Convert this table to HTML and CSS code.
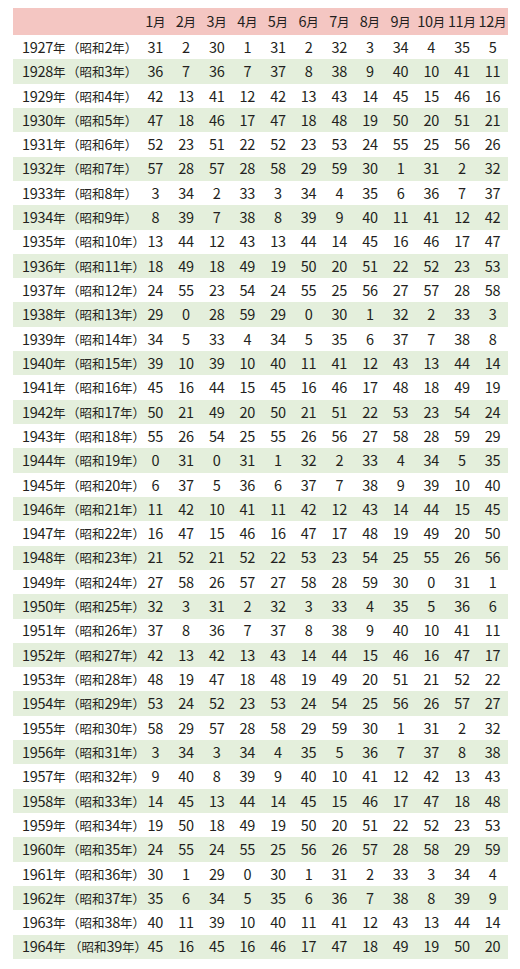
FILE: index.html
```html
<!DOCTYPE html>
<html lang="ja">
<head>
<meta charset="utf-8">
<title>日干支早見表</title>
<link rel="stylesheet" href="styles.css">
</head>
<body>
<table class="chart">
<colgroup><col class="c-lbl"><col span="12"></colgroup>
<thead>
<tr><th></th><th>1<span class="k">月</span></th><th>2<span class="k">月</span></th><th>3<span class="k">月</span></th><th>4<span class="k">月</span></th><th>5<span class="k">月</span></th><th>6<span class="k">月</span></th><th>7<span class="k">月</span></th><th>8<span class="k">月</span></th><th>9<span class="k">月</span></th><th>10<span class="k">月</span></th><th>11<span class="k">月</span></th><th>12<span class="k">月</span></th></tr>
</thead>
<tbody>
<tr><th class="lbl"><span class="yr">1927<span class="k">年</span></span><span class="k">（昭和</span>2<span class="k">年）</span></th><td>31</td><td>2</td><td>30</td><td>1</td><td>31</td><td>2</td><td>32</td><td>3</td><td>34</td><td>4</td><td>35</td><td>5</td></tr>
<tr class="alt"><th class="lbl"><span class="yr">1928<span class="k">年</span></span><span class="k">（昭和</span>3<span class="k">年）</span></th><td>36</td><td>7</td><td>36</td><td>7</td><td>37</td><td>8</td><td>38</td><td>9</td><td>40</td><td>10</td><td>41</td><td>11</td></tr>
<tr><th class="lbl"><span class="yr">1929<span class="k">年</span></span><span class="k">（昭和</span>4<span class="k">年）</span></th><td>42</td><td>13</td><td>41</td><td>12</td><td>42</td><td>13</td><td>43</td><td>14</td><td>45</td><td>15</td><td>46</td><td>16</td></tr>
<tr class="alt"><th class="lbl"><span class="yr">1930<span class="k">年</span></span><span class="k">（昭和</span>5<span class="k">年）</span></th><td>47</td><td>18</td><td>46</td><td>17</td><td>47</td><td>18</td><td>48</td><td>19</td><td>50</td><td>20</td><td>51</td><td>21</td></tr>
<tr><th class="lbl"><span class="yr">1931<span class="k">年</span></span><span class="k">（昭和</span>6<span class="k">年）</span></th><td>52</td><td>23</td><td>51</td><td>22</td><td>52</td><td>23</td><td>53</td><td>24</td><td>55</td><td>25</td><td>56</td><td>26</td></tr>
<tr class="alt"><th class="lbl"><span class="yr">1932<span class="k">年</span></span><span class="k">（昭和</span>7<span class="k">年）</span></th><td>57</td><td>28</td><td>57</td><td>28</td><td>58</td><td>29</td><td>59</td><td>30</td><td>1</td><td>31</td><td>2</td><td>32</td></tr>
<tr><th class="lbl"><span class="yr">1933<span class="k">年</span></span><span class="k">（昭和</span>8<span class="k">年）</span></th><td>3</td><td>34</td><td>2</td><td>33</td><td>3</td><td>34</td><td>4</td><td>35</td><td>6</td><td>36</td><td>7</td><td>37</td></tr>
<tr class="alt"><th class="lbl"><span class="yr">1934<span class="k">年</span></span><span class="k">（昭和</span>9<span class="k">年）</span></th><td>8</td><td>39</td><td>7</td><td>38</td><td>8</td><td>39</td><td>9</td><td>40</td><td>11</td><td>41</td><td>12</td><td>42</td></tr>
<tr><th class="lbl"><span class="yr">1935<span class="k">年</span></span><span class="k">（昭和</span>10<span class="k">年）</span></th><td>13</td><td>44</td><td>12</td><td>43</td><td>13</td><td>44</td><td>14</td><td>45</td><td>16</td><td>46</td><td>17</td><td>47</td></tr>
<tr class="alt"><th class="lbl"><span class="yr">1936<span class="k">年</span></span><span class="k">（昭和</span>11<span class="k">年）</span></th><td>18</td><td>49</td><td>18</td><td>49</td><td>19</td><td>50</td><td>20</td><td>51</td><td>22</td><td>52</td><td>23</td><td>53</td></tr>
<tr><th class="lbl"><span class="yr">1937<span class="k">年</span></span><span class="k">（昭和</span>12<span class="k">年）</span></th><td>24</td><td>55</td><td>23</td><td>54</td><td>24</td><td>55</td><td>25</td><td>56</td><td>27</td><td>57</td><td>28</td><td>58</td></tr>
<tr class="alt"><th class="lbl"><span class="yr">1938<span class="k">年</span></span><span class="k">（昭和</span>13<span class="k">年）</span></th><td>29</td><td>0</td><td>28</td><td>59</td><td>29</td><td>0</td><td>30</td><td>1</td><td>32</td><td>2</td><td>33</td><td>3</td></tr>
<tr><th class="lbl"><span class="yr">1939<span class="k">年</span></span><span class="k">（昭和</span>14<span class="k">年）</span></th><td>34</td><td>5</td><td>33</td><td>4</td><td>34</td><td>5</td><td>35</td><td>6</td><td>37</td><td>7</td><td>38</td><td>8</td></tr>
<tr class="alt"><th class="lbl"><span class="yr">1940<span class="k">年</span></span><span class="k">（昭和</span>15<span class="k">年）</span></th><td>39</td><td>10</td><td>39</td><td>10</td><td>40</td><td>11</td><td>41</td><td>12</td><td>43</td><td>13</td><td>44</td><td>14</td></tr>
<tr><th class="lbl"><span class="yr">1941<span class="k">年</span></span><span class="k">（昭和</span>16<span class="k">年）</span></th><td>45</td><td>16</td><td>44</td><td>15</td><td>45</td><td>16</td><td>46</td><td>17</td><td>48</td><td>18</td><td>49</td><td>19</td></tr>
<tr class="alt"><th class="lbl"><span class="yr">1942<span class="k">年</span></span><span class="k">（昭和</span>17<span class="k">年）</span></th><td>50</td><td>21</td><td>49</td><td>20</td><td>50</td><td>21</td><td>51</td><td>22</td><td>53</td><td>23</td><td>54</td><td>24</td></tr>
<tr><th class="lbl"><span class="yr">1943<span class="k">年</span></span><span class="k">（昭和</span>18<span class="k">年）</span></th><td>55</td><td>26</td><td>54</td><td>25</td><td>55</td><td>26</td><td>56</td><td>27</td><td>58</td><td>28</td><td>59</td><td>29</td></tr>
<tr class="alt"><th class="lbl"><span class="yr">1944<span class="k">年</span></span><span class="k">（昭和</span>19<span class="k">年）</span></th><td>0</td><td>31</td><td>0</td><td>31</td><td>1</td><td>32</td><td>2</td><td>33</td><td>4</td><td>34</td><td>5</td><td>35</td></tr>
<tr><th class="lbl"><span class="yr">1945<span class="k">年</span></span><span class="k">（昭和</span>20<span class="k">年）</span></th><td>6</td><td>37</td><td>5</td><td>36</td><td>6</td><td>37</td><td>7</td><td>38</td><td>9</td><td>39</td><td>10</td><td>40</td></tr>
<tr class="alt"><th class="lbl"><span class="yr">1946<span class="k">年</span></span><span class="k">（昭和</span>21<span class="k">年）</span></th><td>11</td><td>42</td><td>10</td><td>41</td><td>11</td><td>42</td><td>12</td><td>43</td><td>14</td><td>44</td><td>15</td><td>45</td></tr>
<tr><th class="lbl"><span class="yr">1947<span class="k">年</span></span><span class="k">（昭和</span>22<span class="k">年）</span></th><td>16</td><td>47</td><td>15</td><td>46</td><td>16</td><td>47</td><td>17</td><td>48</td><td>19</td><td>49</td><td>20</td><td>50</td></tr>
<tr class="alt"><th class="lbl"><span class="yr">1948<span class="k">年</span></span><span class="k">（昭和</span>23<span class="k">年）</span></th><td>21</td><td>52</td><td>21</td><td>52</td><td>22</td><td>53</td><td>23</td><td>54</td><td>25</td><td>55</td><td>26</td><td>56</td></tr>
<tr><th class="lbl"><span class="yr">1949<span class="k">年</span></span><span class="k">（昭和</span>24<span class="k">年）</span></th><td>27</td><td>58</td><td>26</td><td>57</td><td>27</td><td>58</td><td>28</td><td>59</td><td>30</td><td>0</td><td>31</td><td>1</td></tr>
<tr class="alt"><th class="lbl"><span class="yr">1950<span class="k">年</span></span><span class="k">（昭和</span>25<span class="k">年）</span></th><td>32</td><td>3</td><td>31</td><td>2</td><td>32</td><td>3</td><td>33</td><td>4</td><td>35</td><td>5</td><td>36</td><td>6</td></tr>
<tr><th class="lbl"><span class="yr">1951<span class="k">年</span></span><span class="k">（昭和</span>26<span class="k">年）</span></th><td>37</td><td>8</td><td>36</td><td>7</td><td>37</td><td>8</td><td>38</td><td>9</td><td>40</td><td>10</td><td>41</td><td>11</td></tr>
<tr class="alt"><th class="lbl"><span class="yr">1952<span class="k">年</span></span><span class="k">（昭和</span>27<span class="k">年）</span></th><td>42</td><td>13</td><td>42</td><td>13</td><td>43</td><td>14</td><td>44</td><td>15</td><td>46</td><td>16</td><td>47</td><td>17</td></tr>
<tr><th class="lbl"><span class="yr">1953<span class="k">年</span></span><span class="k">（昭和</span>28<span class="k">年）</span></th><td>48</td><td>19</td><td>47</td><td>18</td><td>48</td><td>19</td><td>49</td><td>20</td><td>51</td><td>21</td><td>52</td><td>22</td></tr>
<tr class="alt"><th class="lbl"><span class="yr">1954<span class="k">年</span></span><span class="k">（昭和</span>29<span class="k">年）</span></th><td>53</td><td>24</td><td>52</td><td>23</td><td>53</td><td>24</td><td>54</td><td>25</td><td>56</td><td>26</td><td>57</td><td>27</td></tr>
<tr><th class="lbl"><span class="yr">1955<span class="k">年</span></span><span class="k">（昭和</span>30<span class="k">年）</span></th><td>58</td><td>29</td><td>57</td><td>28</td><td>58</td><td>29</td><td>59</td><td>30</td><td>1</td><td>31</td><td>2</td><td>32</td></tr>
<tr class="alt"><th class="lbl"><span class="yr">1956<span class="k">年</span></span><span class="k">（昭和</span>31<span class="k">年）</span></th><td>3</td><td>34</td><td>3</td><td>34</td><td>4</td><td>35</td><td>5</td><td>36</td><td>7</td><td>37</td><td>8</td><td>38</td></tr>
<tr><th class="lbl"><span class="yr">1957<span class="k">年</span></span><span class="k">（昭和</span>32<span class="k">年）</span></th><td>9</td><td>40</td><td>8</td><td>39</td><td>9</td><td>40</td><td>10</td><td>41</td><td>12</td><td>42</td><td>13</td><td>43</td></tr>
<tr class="alt"><th class="lbl"><span class="yr">1958<span class="k">年</span></span><span class="k">（昭和</span>33<span class="k">年）</span></th><td>14</td><td>45</td><td>13</td><td>44</td><td>14</td><td>45</td><td>15</td><td>46</td><td>17</td><td>47</td><td>18</td><td>48</td></tr>
<tr><th class="lbl"><span class="yr">1959<span class="k">年</span></span><span class="k">（昭和</span>34<span class="k">年）</span></th><td>19</td><td>50</td><td>18</td><td>49</td><td>19</td><td>50</td><td>20</td><td>51</td><td>22</td><td>52</td><td>23</td><td>53</td></tr>
<tr class="alt"><th class="lbl"><span class="yr">1960<span class="k">年</span></span><span class="k">（昭和</span>35<span class="k">年）</span></th><td>24</td><td>55</td><td>24</td><td>55</td><td>25</td><td>56</td><td>26</td><td>57</td><td>28</td><td>58</td><td>29</td><td>59</td></tr>
<tr><th class="lbl"><span class="yr">1961<span class="k">年</span></span><span class="k">（昭和</span>36<span class="k">年）</span></th><td>30</td><td>1</td><td>29</td><td>0</td><td>30</td><td>1</td><td>31</td><td>2</td><td>33</td><td>3</td><td>34</td><td>4</td></tr>
<tr class="alt"><th class="lbl"><span class="yr">1962<span class="k">年</span></span><span class="k">（昭和</span>37<span class="k">年）</span></th><td>35</td><td>6</td><td>34</td><td>5</td><td>35</td><td>6</td><td>36</td><td>7</td><td>38</td><td>8</td><td>39</td><td>9</td></tr>
<tr><th class="lbl"><span class="yr">1963<span class="k">年</span></span><span class="k">（昭和</span>38<span class="k">年）</span></th><td>40</td><td>11</td><td>39</td><td>10</td><td>40</td><td>11</td><td>41</td><td>12</td><td>43</td><td>13</td><td>44</td><td>14</td></tr>
<tr class="alt"><th class="lbl"><span class="yr wide">1964<span class="k">年</span></span><span class="k">（昭和</span>39<span class="k">年）</span></th><td>45</td><td>16</td><td>45</td><td>16</td><td>46</td><td>17</td><td>47</td><td>18</td><td>49</td><td>19</td><td>50</td><td>20</td></tr>
</tbody>
</table>
</body>
</html>
```

FILE: styles.css
```css
html, body {
  margin: 0;
  background: #ffffff;
}

body {
  padding: 8px 0 0 13px;
  font-family: "Noto Sans CJK JP", sans-serif;
  color: #231f20;
}

.chart {
  border-collapse: collapse;
  table-layout: fixed;
  width: 495px;
}

.c-lbl {
  width: 127px;
}

.chart th,
.chart td {
  padding: 0;
  font-size: 14.5px;
  font-weight: 400;
  letter-spacing: -0.3px;
  line-height: 1;
  text-align: center;
  white-space: nowrap;
}

.chart thead tr {
  height: 27px;
  background: #f4c6c2;
}

.chart tbody tr {
  height: 24.32px;
}

.chart tbody tr.alt {
  background: #e4efdc;
}

.chart .lbl {
  text-align: left;
  padding-left: 9px;
}

.yr {
  display: inline-block;
  width: 45px;
}

.yr.wide {
  width: 47px;
}

.k {
  font-size: 12.5px;
  letter-spacing: 0;
}
```
